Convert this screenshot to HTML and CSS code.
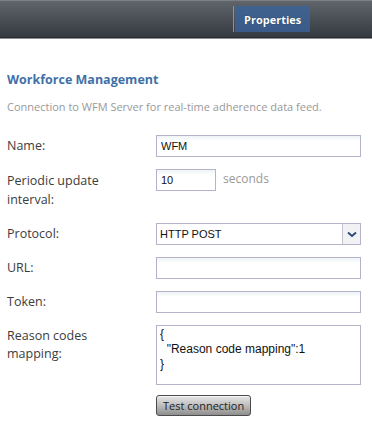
FILE: index.html
```html
<!DOCTYPE html>
<html lang="en">
<head>
    <meta charset="UTF-8">
    <title>Workforce Management - Properties</title>
    <link rel="stylesheet" href="styles.css">
</head>
<body>
    <header class="topbar">
        <div class="tabs">
            <span class="tab-divider"></span>
            <span class="tab active">Properties</span>
        </div>
    </header>

    <main class="panel">
        <h2 class="panel-title">Workforce Management</h2>
        <p class="panel-desc">Connection to WFM Server for real-time adherence data feed.</p>

        <form class="props">
            <div class="row">
                <label class="label">Name:</label>
                <input class="field" type="text" value="WFM">
            </div>
            <div class="row">
                <label class="label tall">Periodic update interval:</label>
                <div class="inline">
                    <input class="field short" type="text" value="10">
                    <span class="unit">seconds</span>
                </div>
            </div>
            <div class="row">
                <label class="label">Protocol:</label>
                <div class="select">
                    <span class="select-value">HTTP POST</span>
                    <span class="select-btn">
                        <svg width="10" height="7" viewBox="0 0 10 7"><path d="M1 1.5 L5 5 L9 1.5" fill="none" stroke="#2c4a7e" stroke-width="2"/></svg>
                    </span>
                </div>
            </div>
            <div class="row">
                <label class="label">URL:</label>
                <input class="field" type="text" value="">
            </div>
            <div class="row">
                <label class="label">Token:</label>
                <input class="field" type="text" value="">
            </div>
            <div class="row">
                <label class="label">Reason codes mapping:</label>
                <textarea class="field area">{
  "Reason code mapping":1
}</textarea>
            </div>
            <div class="row actions">
                <span></span>
                <div><button class="btn" type="button">Test connection</button></div>
            </div>
        </form>
    </main>
</body>
</html>
```

FILE: styles.css
```css
/* Base */
body {
    margin: 0;
    padding: 0;
    background-color: #fff;
    font-family: "Open Sans", sans-serif;
    color: #444;
}

/* Top bar with tabs */
.topbar {
    height: 38px;
    background: linear-gradient(#60656c, #353a41);
    border-top: 1px solid #7c7f83;
    border-bottom: 1px solid #2a2e33;
    box-shadow: 0 1px 0 #8d9095;
    box-sizing: border-box;
}

.tabs {
    display: flex;
    align-items: stretch;
    height: 26px;
    padding-top: 5px;
    padding-left: 233px;
}

.tab-divider {
    width: 1px;
    background-color: #8d9298;
    margin-right: 1px;
}

.tab {
    display: flex;
    align-items: center;
    padding: 0 9px;
    width: 57px;
    color: #fff;
    font-size: 11px;
    font-weight: bold;
    text-shadow: 0 0 1px #1c2a44;
}

.tab.active {
    background: linear-gradient(#40628f, #3a5b89);
}

/* Panel */
.panel {
    padding: 0 7px;
}

.panel-title {
    margin: 33px 0 0;
    font-size: 12.5px;
    line-height: 18px;
    font-weight: bold;
    color: #3f70a8;
}

.panel-desc {
    margin: 10px 0 0;
    font-size: 11px;
    line-height: 16px;
    color: #999;
}

/* Form rows */
.props {
    display: flex;
    flex-direction: column;
    gap: 12px;
    margin-top: 20px;
}

.row {
    display: grid;
    grid-template-columns: 149px 205px;
}

.label {
    padding: 2px 30px 2px 0;
    font-size: 12.5px;
    line-height: 18px;
    color: #3c3c3c;
}

.label.tall {
    line-height: 19px;
}

.field {
    box-sizing: border-box;
    width: 205px;
    height: 22px;
    margin: 0;
    padding: 0 4px;
    border: 1px solid #b3b4c9;
    background: linear-gradient(#eef3f6, #fff 5px);
    font-family: "Liberation Sans", Arial, sans-serif;
    font-size: 11px;
    color: #111;
    outline: none;
}

.field.short {
    width: 60px;
}

.inline {
    display: flex;
    align-items: flex-start;
    gap: 7px;
}

.unit {
    font-size: 12px;
    line-height: 20px;
    color: #999;
}

.select {
    box-sizing: border-box;
    display: flex;
    width: 205px;
    height: 22px;
    border: 1px solid #b3b4c9;
    background-color: #fff;
}

.select-value {
    flex: 1;
    padding: 0 3px;
    line-height: 20px;
    font-family: "Liberation Sans", Arial, sans-serif;
    font-size: 11px;
    color: #111;
}

.select-btn {
    display: flex;
    align-items: center;
    justify-content: center;
    width: 17px;
    border-left: 1px solid #c4c5d4;
    background-color: #f2f2f5;
}

.area {
    height: 60px;
    padding: 1px 3px;
    resize: none;
    font-size: 12px;
    line-height: 15px;
    background: #fff;
}

.actions {
    margin-top: -4px;
}

.btn {
    height: 21px;
    padding: 0 6px;
    border: 1px solid #4c4c4c;
    border-radius: 3px;
    background: linear-gradient(#e6e6e6, #bdbdbd 50%, #8e8e8e);
    font-family: "Open Sans", sans-serif;
    font-size: 11px;
    color: #222;
    box-shadow: inset 0 1px 0 #f6f6f6;
}
```
